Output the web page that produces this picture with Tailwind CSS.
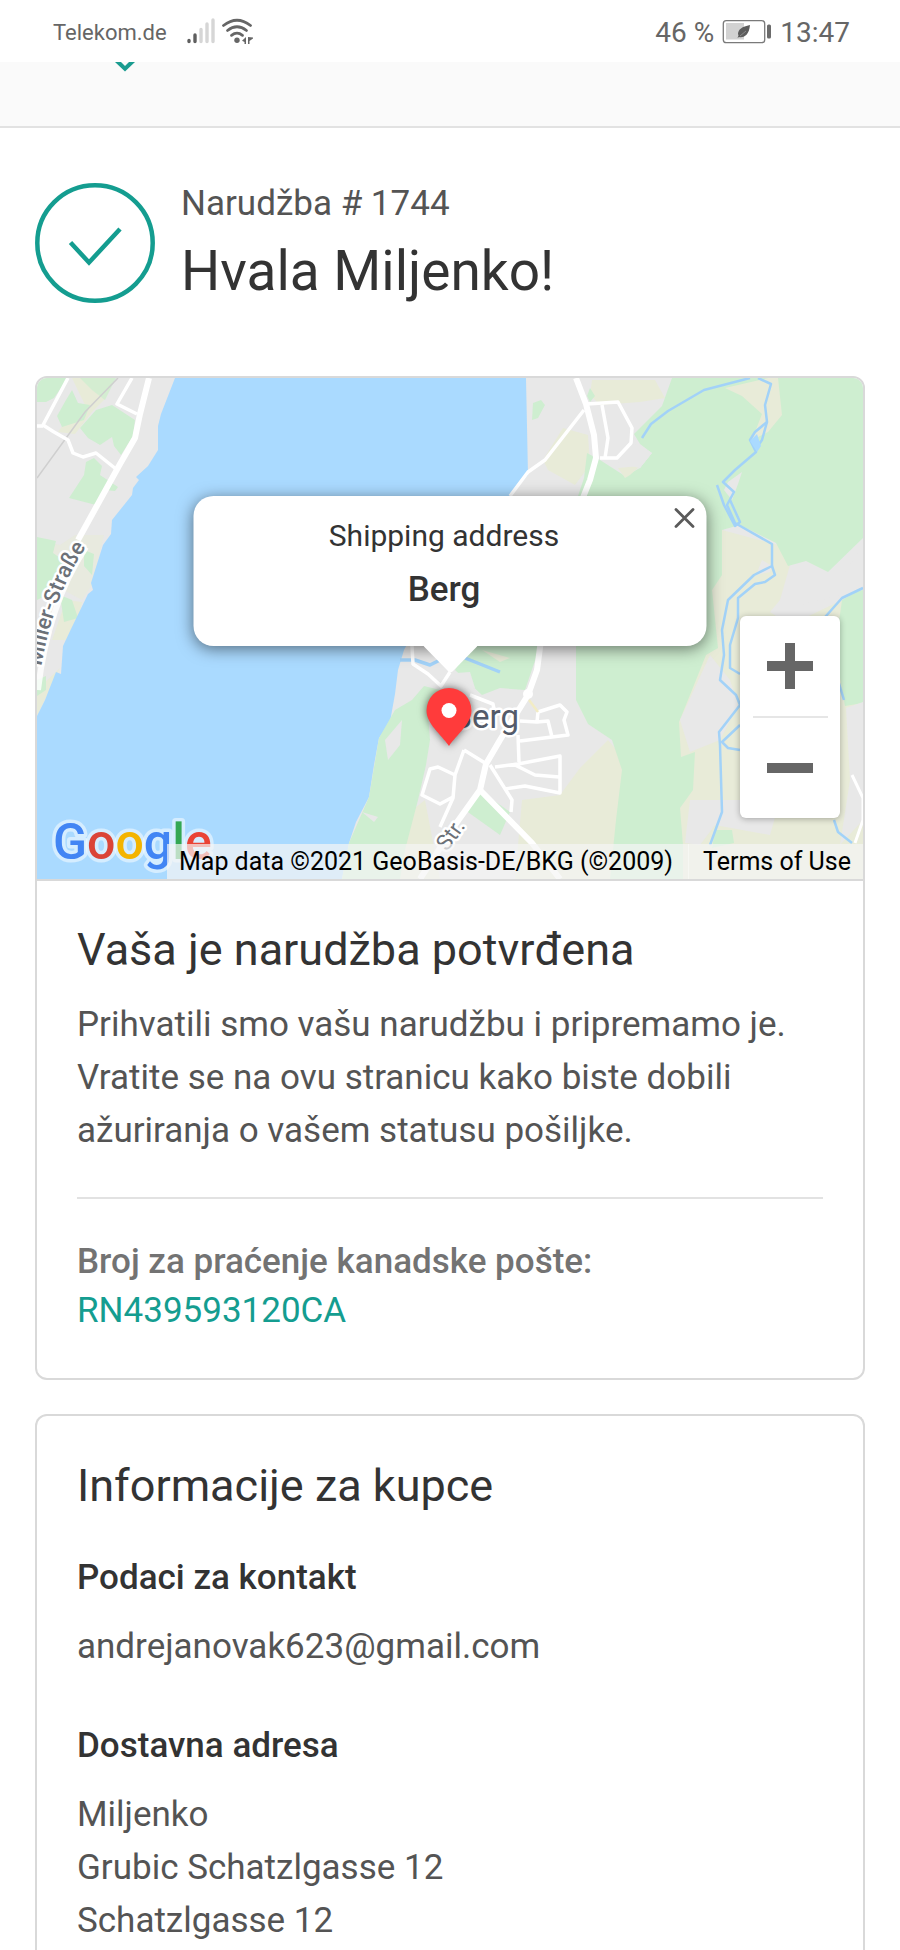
<!DOCTYPE html>
<html lang="hr">
<head>
<meta charset="utf-8">
<meta name="viewport" content="width=device-width, initial-scale=1">
<title>Narudžba # 1744</title>
<script src="https://cdn.jsdelivr.net/npm/@tailwindcss/browser@4"></script>
</head>
<body class="bg-white">
<div class="flex min-h-screen flex-col font-[Roboto,'Noto_Sans',sans-serif] text-[35px] leading-[53px] text-[#545454]">

  <!-- Phone status bar -->
  <div class="flex h-[62px] items-center justify-between bg-white pl-[53px] pr-[50px] pt-1 text-[28px] leading-8 text-[#666]">
    <div class="flex items-center">
      <span class="text-[22px]">Telekom.de</span>
      <svg class="ml-[18px] h-[30px] w-[32px]" viewBox="185 18 32 30" aria-label="Signal">
        <g stroke-width="3.4" stroke-linecap="round">
          <path d="M189 40.500V41.500M195 35V41.500" stroke="#5f5f5f"/>
          <path d="M201 29.500V41.500M207 24V41.500M213 20V41.500" stroke="#d6d6d6"/>
        </g>
      </svg>
      <svg class="ml-1 h-[30px] w-[34px]" viewBox="221 18 34 30" aria-label="Wi-Fi">
        <g fill="none" stroke="#666" stroke-width="2.800" stroke-linecap="round">
          <path d="M223.500 25.500Q237 15 250.500 25.500"/>
          <path d="M227.500 30.500Q237 23 246.500 30.500"/>
          <path d="M231.500 35.300Q237 31 242.500 35.300"/>
        </g>
        <circle cx="237" cy="40.300" r="2.700" fill="#666"/>
        <path d="M246 37v7h-1.500v-2L242 40.800zM248 37v7h1.500v-3L253 38.500v-1z" fill="#666"/>
      </svg>
    </div>
    <div class="flex items-center">
      <span>46 %</span>
      <svg class="mx-2 h-[26px] w-[50px]" viewBox="722 20 50 26" aria-label="Baterija">
        <rect x="723.300" y="20.700" width="41.400" height="22" rx="3" fill="#fff" stroke="#7a7a7a" stroke-width="1.300"/>
        <rect x="726" y="23" width="18" height="16.500" fill="#d2d2d2"/>
        <path d="M750 25C742 26.500 738 29.500 738 34l.5 1.500L737.500 38l1.500-1c4 1 10-1 11-12z" fill="#5c5c5c"/>
        <path d="M740 36l6-5" stroke="#aaa" stroke-width=".6"/>
        <rect x="767" y="24.500" width="4" height="14" rx="1.500" fill="#6b6b6b"/>
      </svg>
      <span>13:47</span>
    </div>
  </div>

  <!-- Order summary strip, scrolled under the status bar -->
  <div class="h-[66px] border-b-2 border-[#e2e2e2] bg-[#fafafa] pl-[114px]">
    <svg class="h-[10px] w-[22px]" viewBox="0 0 22 10" aria-hidden="true"><path d="M1 0h6l4 4 4-4h6L11 9.500z" fill="#1a9c90"/></svg>
  </div>

  <main class="flex grow flex-col px-[35px] pt-[52px]">
    <header class="flex items-center gap-[26px]">
      <svg class="size-[120px] shrink-0" viewBox="0 0 120 120" fill="none" stroke="#149d90" stroke-width="4.500" aria-hidden="true">
        <circle cx="60" cy="60" r="57.700"/>
        <path d="M35.500 59.500L54 79.500L85 46"/>
      </svg>
      <div class="flex flex-col gap-2">
        <p class="leading-[48px]">Narudžba # 1744</p>
        <h1 class="text-[55px] leading-[70px] text-[#333]">Hvala Miljenko!</h1>
      </div>
    </header>

    <section class="mt-[70px] overflow-hidden rounded-xl border-2 border-[#d9d9d9]">
      <!-- Map -->
      <div class="relative h-[503px] overflow-hidden border-b-2 border-[#d9d9d9] bg-[#e8e8e8]">
        <svg class="absolute inset-0 size-full" viewBox="37 378 826 501" preserveAspectRatio="xMidYMid slice" role="img" aria-label="Map">
          <rect x="37" y="378" width="826" height="501" fill="#e8e8e8"/>
          <!-- west bank parks -->
          <g fill="#e8ebd8">
            <path d="M72 378H115L106 398L92 412L75 434L58 432L65 422L85 405Z"/>
            <path d="M37 540L60 545L75 535H104L92 585L82 600L60 588L45 572Z" opacity=".6"/>
            <path d="M66 600L82 602L78 622L66 640L52 640Z"/>
            <path d="M37 690L60 668L37 716Z"/>
          </g>
          <g fill="#ceeed0">
            <path d="M37 378H68L54 398L46 402H37Z"/>
            <path d="M80 378H116L105 400L92 390Z" opacity=".8"/>
            <path d="M72 390L78 403L90 405L84 420L62 427L57 416L66 400Z"/>
            <path d="M80 428L96 410L112 405L135 420L133 436L121 455L114 446L112 437L100 445L88 438Z"/>
            <path d="M86 462L94 458L102 466L100 475L118 487L115 491L104 490L96 505L69 498L84 475Z"/>
            <path d="M37 537L56 541L53 553L66 562L60 588L45 596L37 600Z"/>
            <path d="M84 550L94 554L92 575L84 566Z"/>
            <path d="M60 595L72 600L78 618L64 622Z"/>
            <path d="M37 680L46 676L46 690L37 696Z"/>
          </g>
          <!-- lake -->
          <path fill="#aadaff" d="M175 378L161 414L158 426V450L148 466L136 477L139 480L133 488L132 495L112 520L111 534L103 545L91 583L93 590L88 594L71 629L63 646L61 674L56 672L45 700L37 716V879H342L349 843L356 822L369 797L374 765L379 738L390 722L395 694L398 670L404 650L420 620L470 540L510 496L528 475L526 378Z"/>
          <!-- east bank: farmland -->
          <g fill="#e8ebd8">
            <path d="M592 380H655L665 398L640 402L600 405L590 395Z"/>
            <path d="M563 428L588 435L590 465L575 485L548 470L543 460Z"/>
            <path d="M700 640L700 520L722 530L778 545L790 565L780 600L770 612L790 625L863 590V879H660V650Z"/>
            <path d="M522 800L560 795L580 768L608 740L625 760V879H515Z"/>
            <path d="M400 820L425 800L440 879H395Z"/>
          </g>
          <!-- east bank: woods -->
          <g fill="#ceeed0">
            <path d="M672 378H863V538L828 572L806 561L788 566L776 543L740 525L722 530L722 575L712 590L718 648L706 655L692 690L679 722L681 757L695 752L693 790L680 808L683 845V879H610L616 820L622 770L612 740L588 724L576 700V640L578 496L584 478L587 453L600 460L625 476L640 468L652 453L640 444L634 434L662 406Z"/>
            <path d="M412 700L424 686L440 690L428 715L430 740L426 765L418 800L405 850L400 879H342L349 843L369 797L379 738L395 710Z"/>
            <path d="M470 646H540L525 690L500 688L482 695L455 670Z"/>
            <path d="M482 792L510 812L500 835L465 810Z"/>
            <path d="M533 403L541 400L545 405L538 418L532 420Z"/>
            <path d="M590 388L595 396L590 402L587 396Z"/>
            <path d="M842 600L863 588V703L845 706L835 650Z"/>
            <path d="M715 830H732L734 843L712 848Z"/>
          </g>
          <g fill="#e8ebd8">
            <path d="M725 388L768 378H778L782 415L768 432L752 440L762 414L742 396Z"/>
            <path d="M618 468L640 466L630 475L625 478Z"/>
            <path d="M482 650L510 658L500 662Z"/>
          </g>
          <g fill="#e8e8e8">
            <path d="M636 444L652 453L640 468L615 462L630 445Z"/>
            <path d="M728 482L742 472L738 484L732 500L724 490Z"/>
            <path d="M710 655L730 680L738 705L720 740L690 752L680 720Z"/>
            <path d="M690 800L780 800L770 835L715 825L700 845L685 843Z"/>
            <path d="M846 708L863 702V820L840 845L850 780Z"/>
            <path d="M762 560L772 566L770 572L756 575ZM840 580L863 545V590L800 605L775 610L790 580Z"/>
            <path d="M385 740L402 720L400 745L388 760Z"/>
            <path d="M362 812L378 817L374 822Z"/>
            <path d="M430 675L470 672L475 688L440 690Z"/>
          </g>
          <!-- streams -->
          <g fill="none" stroke="#a2d2f8" stroke-width="2.500" stroke-linejoin="round">
            <path d="M750 378L704 390L668 411L651 424L642 438"/>
            <path d="M758 378L771 384L765 405L767 422L755 432L750 440L756 452L735 470L723 482L734 492L727 505L735 523L772 544V566L754 575L728 600L722 630L724 655L720 680L736 695L740 705L719 732L720 745L722 812L710 845"/>
            <path d="M767 422L762 440L755 450"/>
            <path d="M717 485L724 505L735 526L740 522L730 500"/>
            <path d="M772 566L775 575L765 582L755 584L738 598V618L730 645L730 668L740 674"/>
            <path d="M740 725L722 742L728 748L740 750"/>
            <path d="M863 588L842 598L826 616L800 650L838 680L844 700"/>
            <path d="M834 820L838 832L852 843"/>
            <path d="M400 660L415 660L430 665L450 655M465 658L500 672" stroke-width="3.500"/>
          </g>
          <path d="M750 441L757 434L761 446L757 452Z" fill="#aadaff"/>
          <!-- railway -->
          <path d="M118 378L85 412L37 478" fill="none" stroke="#cfcfcf" stroke-width="1.500"/>
          <!-- roads -->
          <g fill="none" stroke="#fff" stroke-width="3.500" stroke-linejoin="round">
            <path d="M68 378L43 425L54 432L68 440L73 453L83 457L96 453L116 469M37 426H43M132 378L117 404L137 414"/>
            <path d="M510 496L528 472L545 460L584 410M587 404L618 402L632 428L631 443L617 458H600M602 405L608 438L605 458"/>
            <path d="M412 646L413 664L428 674L441 686L450 672M470 695L493 704L495 714"/>
            <path d="M538 712L537 722L520 721M538 712L560 705L567 712L564 720L568 735L520 741M537 722L548 721L552 737M518 735L519 762M495 767L518 764L560 756V793L525 786L505 789M513 764L535 775L559 777"/>
            <path d="M464 750L485 763M464 750L455 775L453 798L440 827M455 775L438 767L430 769L422 795L440 804L453 797M490 765L512 800L511 812"/>
            <path d="M852 775L863 798V820L855 843" stroke-width="3"/>
          </g>
          <path d="M529 700L538 712" stroke="#f2ecc4" stroke-width="2.500"/>
          <g fill="none" stroke="#fff" stroke-width="6" stroke-linejoin="round">
            <path d="M149 378L140 414L135 438L120 464L78 540"/>
            <path d="M576 378L586 404L594 435L596 458L590 480L582 500L541 640L537 670L528 695L500 740L486 764L480 790L455 825L420 879"/>
            <path d="M480 790L532 843L560 879"/>
          </g>
          <circle cx="528" cy="694" r="5" fill="#fff"/>
          <!-- place and street names -->
          <path id="street" d="M38 690Q48 604 86 547" fill="none" stroke="#fff" stroke-opacity=".8" stroke-width="6"/>
          <g font-family="Roboto, sans-serif" stroke="#fff" stroke-width="5" stroke-linejoin="round" paint-order="stroke">
            <text font-size="22" font-weight="500" fill="#6c7178"><textPath href="#street" startOffset="100%" text-anchor="end">Miller-Straße</textPath></text>
            <text x="519" y="728" font-size="33" text-anchor="end" fill="#545b69">Berg</text>
            <text transform="translate(447 852) rotate(-54)" font-size="22" fill="#6c7178">Str.</text>
          </g>
          <text x="53" y="859" font-family="Roboto, sans-serif" font-size="50" font-weight="500" stroke="#fff" stroke-opacity=".5" stroke-width="7" stroke-linejoin="round" paint-order="stroke"><tspan fill="#4285f4">G</tspan><tspan fill="#db4437">o</tspan><tspan fill="#f4b400">o</tspan><tspan fill="#4285f4">g</tspan><tspan fill="#34a853">l</tspan><tspan fill="#ea4335">e</tspan></text>
        </svg>

        <!-- Marker -->
        <svg class="absolute left-1/2 top-[302px] h-[76px] w-[64px] -translate-x-1/2 drop-shadow-[0_0_4px_rgba(0,0,0,0.6)]" viewBox="0 0 64 76" aria-hidden="true">
          <path d="M31 8A22.500 22.500 0 0 0 8.500 30.500C8.500 44 23 54 31 66C39 54 53.500 44 53.500 30.500A22.500 22.500 0 0 0 31 8Z" fill="#ff3b3b"/>
          <circle cx="31" cy="30.500" r="7.500" fill="#fff"/>
        </svg>

        <!-- Address bubble -->
        <div class="absolute left-1/2 top-[118px] h-[150px] w-[513px] -translate-x-1/2 rounded-[20px] bg-white shadow-[0_3px_16px_rgba(0,0,0,0.5)]">
          <div class="flex flex-col items-center gap-1 pr-3 pt-[17px] text-[#333]">
            <p class="text-[30px] leading-[46px]">Shipping address</p>
            <p class="font-medium leading-[53px]">Berg</p>
          </div>
          <button type="button" aria-label="Close" class="absolute right-1 top-1 flex size-9 items-center justify-center">
            <svg class="size-[22px]" viewBox="0 0 22 22" stroke="#5a5a5a" stroke-width="2.800" stroke-linecap="round"><path d="M2.500 2.500L19.500 19.500M19.500 2.500L2.500 19.500"/></svg>
          </button>
          <svg class="absolute left-1/2 top-full h-[27px] w-[54px] -translate-x-1/2" viewBox="0 0 54 27" aria-hidden="true"><path d="M0 0H54L29 25.500Q27 27 25 25.500Z" fill="#fff"/></svg>
        </div>

        <!-- Zoom control -->
        <div class="absolute right-[23px] top-[238px] flex w-[100px] flex-col items-center rounded-md bg-white shadow-[0_1px_6px_rgba(0,0,0,0.3)]">
          <button type="button" aria-label="Zoom in" class="flex h-[100px] w-full items-center justify-center">
            <svg class="size-[46px]" viewBox="0 0 46 46" fill="#666"><path d="M18 0H28V18H46V28H28V46H18V28H0V18H18Z"/></svg>
          </button>
          <span class="h-[2px] w-[75px] bg-[#e6e6e6]"></span>
          <button type="button" aria-label="Zoom out" class="flex h-[100px] w-full items-center justify-center">
            <svg class="h-[10px] w-[46px]" viewBox="0 0 46 10" fill="#666"><path d="M0 0H46V10H0Z"/></svg>
          </button>
        </div>

        <!-- Attribution -->
        <div class="absolute bottom-0 right-0 flex h-[35px] items-center bg-[#f5f5f5]/70 text-[25px] leading-[35px] text-black">
          <span class="pl-3 pr-[15px]">Map data ©2021 GeoBasis-DE/BKG (©2009)</span>
          <a href="#" class="border-l border-white/40 pl-[14px] pr-3">Terms of Use</a>
        </div>
      </div>

      <div class="px-10 pb-[43px] pt-[39px]">
        <h2 class="text-[45px] leading-[60px] text-[#333]">Vaša je narudžba potvrđena</h2>
        <p class="mt-[18px]">Prihvatili smo vašu narudžbu i pripremamo je. Vratite se na ovu stranicu kako biste dobili ažuriranja o vašem statusu pošiljke.</p>
        <hr class="mb-[38px] mt-10 border-t-2 border-[#e2e2e2]">
        <p class="font-medium leading-[49px] text-[#737373]">Broj za praćenje kanadske pošte:</p>
        <a href="#" class="block leading-[49px] text-[#149d90]">RN439593120CA</a>
      </div>
    </section>

    <section class="mt-[34px] grow rounded-t-xl border-2 border-b-0 border-[#d9d9d9] px-10 pt-10">
      <h2 class="text-[45px] leading-[60px] text-[#333]">Informacije za kupce</h2>
      <h3 class="mt-[35px] font-medium text-[#333]">Podaci za kontakt</h3>
      <p class="mt-4">andrejanovak623@gmail.com</p>
      <h3 class="mt-[46px] font-medium text-[#333]">Dostavna adresa</h3>
      <address class="mt-4 not-italic">Miljenko<br>Grubic Schatzlgasse 12<br>Schatzlgasse 12</address>
    </section>
  </main>
</div>
</body>
</html>
